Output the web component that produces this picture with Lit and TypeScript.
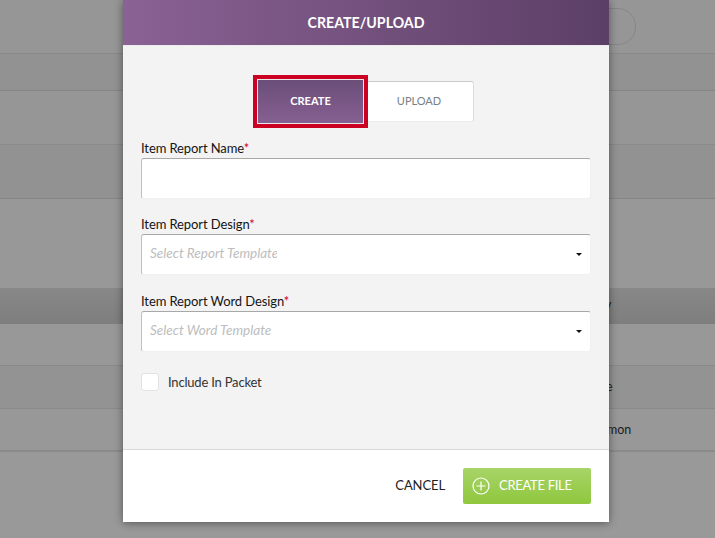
import { LitElement, html, css } from "lit";
import { customElement } from "lit/decorators.js";

@customElement("app-root")
export class AppRoot extends LitElement {
  static styles = css`
    :host { display: block; width: 715px; height: 538px; position: relative; overflow: hidden; background: #999; font-family: Lato, "Liberation Sans", sans-serif; color: #222; }
    .bg { display: flex; flex-direction: column; height: 538px; }
    .row { border-bottom: 1px solid #8a8a8a; flex: none; box-sizing: border-box; display: flex; justify-content: flex-end; align-items: center; font-size: 12.5px; color: #1c1c1c; position: relative; }
    .r1 { height: 54px; background: #969696; }
    .r2 { height: 37px; background: #929292; border-bottom-color: #858585; }
    .r3 { height: 54px; background: #969696; }
    .r4 { height: 54px; background: #929292; border-bottom-color: #858585; }
    .r5 { height: 89px; background: #989898; border-bottom: 0; }
    .head { height: 36px; background: linear-gradient(#888, #7e7e7e); border-bottom: 0; }
    .r6 { height: 42px; background: #989898; }
    .r7 { height: 43px; background: #939393; }
    .r8 { height: 43px; background: #989898; border-bottom: 2px solid #8a8a8a; }
    .cell { box-sizing: border-box; white-space: nowrap; padding-bottom: 1px; }
    .c-y { width: 110px; padding-bottom: 4px; }
    .c-e { width: 109px; }
    .c-mon { width: 108px; }
    .pill { position: absolute; left: 560px; top: 8px; width: 76px; height: 37px; border-radius: 18px; border: 1px solid #868686; box-sizing: border-box; }
    .modal { position: absolute; left: 123px; top: 0; width: 486px; height: 522px; background: #f3f3f3; box-shadow: 0 1px 8px rgba(0,0,0,.45); border-radius: 0 0 2px 2px; display: flex; flex-direction: column; }
    .title { height: 45px; flex: none; background: linear-gradient(90deg, #8a6294, #5c3f66); color: #fff; font-weight: 700; font-size: 14.2px; display: flex; align-items: center; justify-content: center; border-bottom: 1px solid #ececec; }
    .body { flex: 1; padding: 30px 18px 0 18px; display: flex; flex-direction: column; }
    .tabs { display: flex; justify-content: flex-start; height: 48px; align-items: stretch; padding-left: 112px; }
    .create { width: 115px; height: 53px; margin-top: -1px; box-sizing: border-box; border: 4px solid #cc0022; background: linear-gradient(#6a4d78, #866092); box-shadow: inset 0 0 0 1px #e8e8e8; color: #fff; font-size: 11px; font-weight: 700; display: flex; align-items: center; justify-content: center; padding-bottom: 3px; }
    .upload { width: 106px; height: 41px; margin-top: 5px; box-sizing: border-box; background: #fff; border: 1px solid #ececec; border-top: 1px solid #c8c8c8; border-right: 1px solid #dcdcdc; border-left: 0; border-radius: 0 3px 3px 0; color: #7a7f85; font-size: 11px; display: flex; align-items: center; justify-content: center; padding: 0 3px 3px 0; }
    .field { display: flex; flex-direction: column; }
    .f-name { margin-top: 16px; }
    .f-design { margin-top: 17px; }
    .f-word { margin-top: 18px; }
    label { font-size: 13px; letter-spacing: -0.1px; line-height: 16px; color: #151515; height: 16px; }
    label b { color: #d0021b; font-weight: 400; }
    .input { height: 41px; margin-top: 2px; box-sizing: border-box; background: #fff; border: 1px solid #f0f0f0; border-top: 1px solid #a8a8a8; border-left: 1px solid #c0c0c0; border-radius: 3px; position: relative; display: flex; align-items: center; padding-left: 8px; }
    .ph { font-style: italic; color: #bdbdbd; font-size: 13.5px; overflow: hidden; white-space: nowrap; margin-top: -4px; }
    .ph-report { width: 127px; }
    .ph-word { width: 121px; }
    .caret { position: absolute; right: 8px; top: 18px; width: 0; height: 0; border-left: 3px solid transparent; border-right: 3px solid transparent; border-top: 3px solid #111; }
    .check { display: flex; align-items: center; gap: 9px; margin-top: 21px; font-size: 13px; letter-spacing: -0.2px; color: #333; }
    .box { width: 18px; height: 18px; background: #fff; border: 1px solid #e2e2e2; border-radius: 3px; box-sizing: border-box; }
    .foot { flex: none; height: 73px; background: #fff; border-top: 1px solid #d8d8d8; display: flex; align-items: center; justify-content: flex-end; padding: 0 18px 0 0; gap: 18px; box-sizing: border-box; }
    .cancel { font-size: 13px; letter-spacing: -0.1px; color: #222; padding-bottom: 3px; }
    .go { width: 128px; height: 36px; border-radius: 2px; background: linear-gradient(#a8d468, #8fc73e); color: #fff; font-size: 13px; letter-spacing: -0.3px; display: flex; align-items: center; padding-left: 9px; gap: 9px; box-sizing: border-box; }
    .go svg { flex: none; }
    .go span { padding-bottom: 3px; }
  `;

  render() {
    return html`
      <div class="bg">
        <div class="row r1"></div>
        <div class="row r2"></div>
        <div class="row r3"></div>
        <div class="row r4"></div>
        <div class="row r5"></div>
        <div class="row head"><span class="cell c-y">y</span></div>
        <div class="row r6"></div>
        <div class="row r7"><span class="cell c-e">e</span></div>
        <div class="row r8"><span class="cell c-mon">mon</span></div>
      </div>
      <div class="pill"></div>
      <div class="modal">
        <div class="title">CREATE/UPLOAD</div>
        <div class="body">
          <div class="tabs">
            <div class="create">CREATE</div>
            <div class="upload">UPLOAD</div>
          </div>
          <div class="field f-name">
            <label>Item Report Name<b>*</b></label>
            <div class="input"></div>
          </div>
          <div class="field f-design">
            <label>Item Report Design<b>*</b></label>
            <div class="input"><span class="ph ph-report">Select Report Template</span><i class="caret"></i></div>
          </div>
          <div class="field f-word">
            <label>Item Report Word Design<b>*</b></label>
            <div class="input"><span class="ph ph-word">Select Word Template</span><i class="caret"></i></div>
          </div>
          <div class="check"><span class="box"></span>Include In Packet</div>
        </div>
        <div class="foot">
          <span class="cancel">CANCEL</span>
          <div class="go">
            <svg width="18" height="18" viewBox="0 0 18 18" fill="none" stroke="#fff" stroke-width="1.2"><circle cx="9" cy="9" r="8"/><path d="M9 4.5v9M4.5 9h9"/></svg>
            <span>CREATE FILE</span>
          </div>
        </div>
      </div>
    `;
  }
}
